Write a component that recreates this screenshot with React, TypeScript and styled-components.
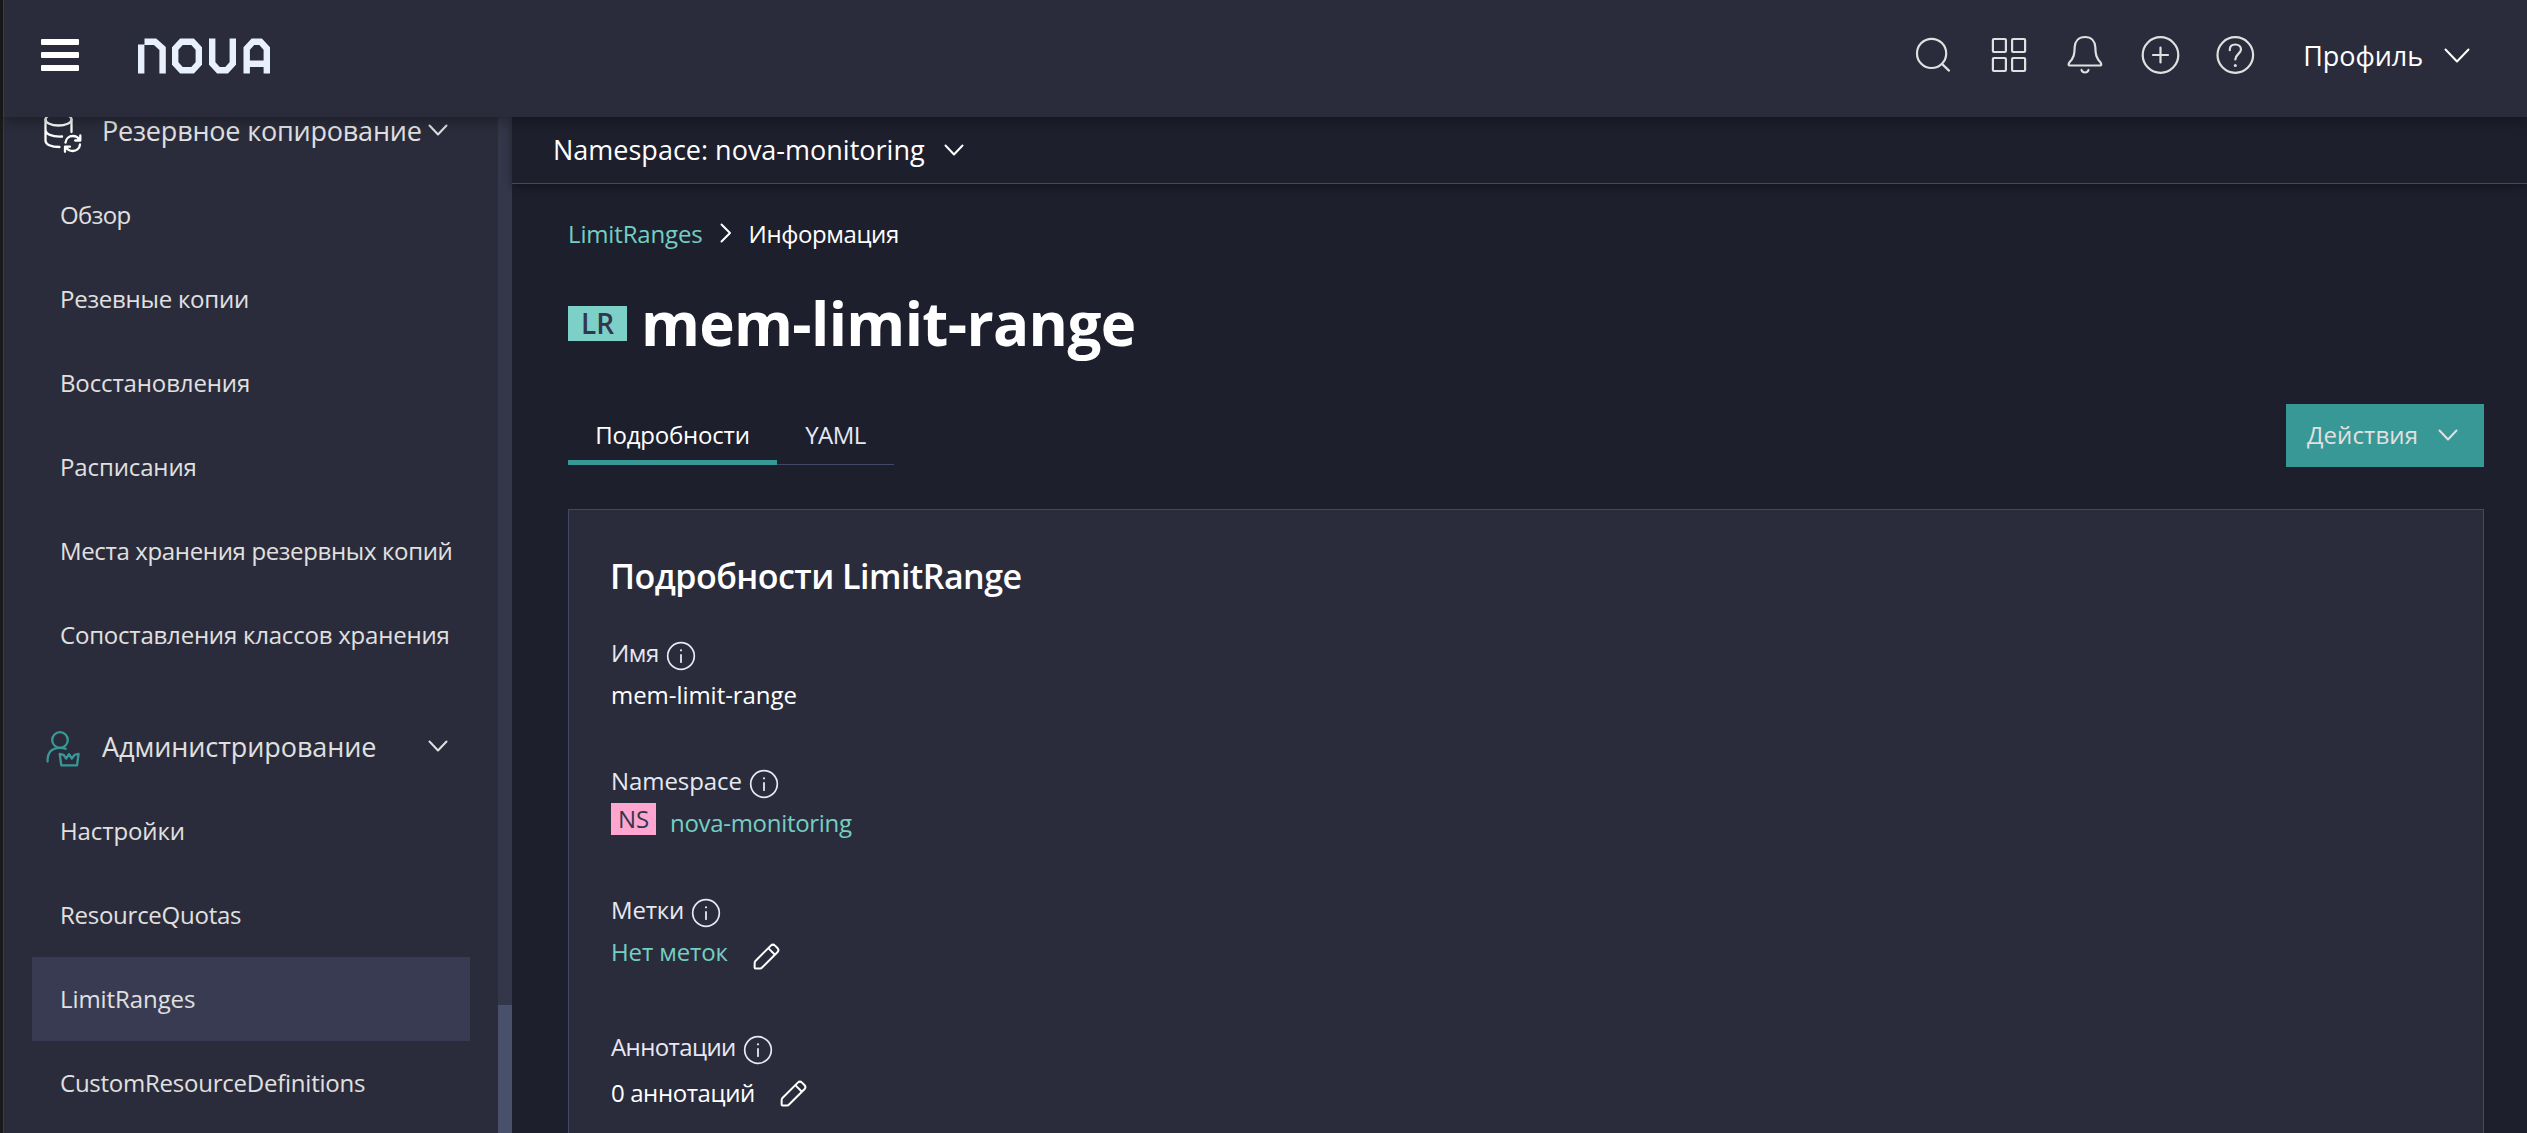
import React from "react";
import styled, { createGlobalStyle } from "styled-components";

const color = {
  page: "#1e1f2d",
  panel: "#2b2c3b",
  active: "#393b52",
  border: "#434868",
  teal: "#389896",
  link: "#74cfc3",
  text: "#ffffff",
  soft: "#e6e8f4",
  nav: "#e0e0e0",
};

const GlobalStyle = createGlobalStyle`
  * { box-sizing: border-box; }
  html, body, #root { margin: 0; height: 100%; }
  body {
    background: ${color.page};
    color: ${color.text};
    font-family: "Open Sans", "Noto Sans", sans-serif;
    font-size: 24px;
    overflow: hidden;
  }
`;

const Text = styled.span<{ $track?: number }>`
  letter-spacing: ${(p) => p.$track ?? 0}px;
  white-space: nowrap;
`;

const Shell = styled.div`
  display: flex;
  flex-direction: column;
  height: 1133px;
  border-left: 3px solid #1a1a1b;
`;

const Header = styled.header`
  position: relative;
  z-index: 2;
  flex: none;
  display: flex;
  align-items: center;
  height: 117px;
  padding: 0 57px 0 37px;
  background: ${color.panel};
  border-left: 1px solid #3c3c42;
  box-shadow: 0 4px 12px rgba(0, 0, 0, 0.32);
`;

const Burger = styled.div`
  display: grid;
  gap: 7px;
  width: 38px;
  margin-top: -7px;
`;

const BurgerBar = styled.i`
  height: 6px;
  border-radius: 1px;
  background: #fff;
`;

const Logo = styled.svg`
  display: block;
  margin: -6px auto 0 59px;
`;

const Tools = styled.div`
  display: flex;
  gap: 35.5px;
  margin: -7px 48px 0 0;
`;

const Icon = styled.svg`
  display: block;
  flex: none;
  fill: none;
  stroke: currentColor;
  stroke-width: 2;
  stroke-linecap: round;
  stroke-linejoin: round;
`;

const ToolIcon = styled(Icon)`
  width: 40px;
  height: 40px;
  color: ${color.nav};
  stroke-width: 2.2;
`;

const Profile = styled.div`
  display: flex;
  align-items: center;
  gap: 21px;
  font-size: 27px;
  line-height: 40px;
  margin-top: -7px;
`;

const ProfileName = styled(Text)`
  padding-top: 2px;
`;

const Body = styled.div`
  flex: 1;
  min-height: 0;
  display: flex;
`;

const Sidebar = styled.nav`
  width: 495px;
  flex: none;
  overflow: hidden;
  padding: 0 28px;
  background: ${color.panel};
  border-left: 1px solid #3c3c42;
  color: ${color.nav};
`;

const Group = styled.div<{ $first?: boolean }>`
  display: flex;
  align-items: center;
  height: ${(p) => (p.$first ? 84 : 70)}px;
  margin: ${(p) => (p.$first ? "-28px 0 0" : "35px 0 7px")};
  padding: 0 22px 2px 10px;
  font-size: 27px;
  line-height: 27px;
`;

const GroupIcon = styled(Icon)<{ $top?: number }>`
  width: 42px;
  height: 44px;
  margin: ${(p) => p.$top ?? 0}px 18px 0 0;
  stroke-width: 2.3;
`;

const GroupLabel = styled(Text)`
  flex: 1;
`;

const NavItem = styled.div<{ $active?: boolean }>`
  display: flex;
  align-items: center;
  height: 84px;
  padding: 0 0 2px 28px;
  background: ${(p) => (p.$active ? color.active : "transparent")};
`;

const Track = styled.div`
  display: flex;
  flex-direction: column;
  justify-content: flex-end;
  width: 14px;
  flex: none;
  background: #343649;
`;

const Thumb = styled.div`
  height: 128px;
  background: #48506b;
`;

const Main = styled.main`
  flex: 1;
  min-width: 0;
  display: flex;
  flex-direction: column;
`;

const NamespaceBar = styled.div`
  flex: none;
  display: flex;
  align-items: center;
  gap: 19px;
  height: 67px;
  padding: 0 0 1px 41px;
  border-bottom: 1px solid ${color.border};
  box-shadow: 0 3px 8px rgba(0, 0, 0, 0.35);
  font-size: 27px;
`;

const Content = styled.section`
  flex: 1;
  min-height: 0;
  display: flex;
  flex-direction: column;
  padding: 29px 43px 0 56px;
`;

const Crumbs = styled.div`
  display: flex;
  align-items: center;
  height: 40px;
  gap: 17px;
`;

const Link = styled(Text)`
  color: ${color.link};
`;

const TitleRow = styled.div`
  display: flex;
  align-items: center;
  gap: 14px;
  height: 80px;
  margin-top: 30px;
`;

const KindBadge = styled.span`
  display: flex;
  align-items: center;
  justify-content: center;
  width: 59px;
  height: 35px;
  background: #7cd0c8;
  color: #32374c;
  font-size: 28px;
  font-weight: 600;
`;

const Title = styled.h1<{ $track: number }>`
  margin: 0;
  font-size: 60px;
  line-height: 80px;
  font-weight: 700;
  letter-spacing: ${(p) => p.$track}px;
`;

const TabRow = styled.div`
  display: flex;
  justify-content: space-between;
  height: 63px;
  margin-top: 41px;
`;

const Tabs = styled.div`
  display: flex;
  height: 61px;
`;

const Tab = styled.div<{ $width: number; $active?: boolean }>`
  display: flex;
  justify-content: center;
  width: ${(p) => p.$width}px;
  line-height: 62px;
  color: ${(p) => (p.$active ? color.text : color.soft)};
  box-shadow: inset 0 ${(p) => (p.$active ? "-5px" : "-1px")} 0
    ${(p) => (p.$active ? color.teal : color.border)};
`;

const ActionButton = styled.button`
  display: flex;
  align-items: center;
  justify-content: space-between;
  width: 198px;
  padding: 0 26px 2px 21px;
  border: 0;
  background: ${color.teal};
  color: ${color.nav};
  font: inherit;
`;

const Card = styled.div`
  flex: 1;
  min-height: 0;
  overflow: hidden;
  margin-top: 42px;
  padding: 43px 42px 0;
  border: 1px solid ${color.border};
  border-bottom: 0;
  background: ${color.panel};
`;

const CardTitle = styled.h2`
  margin: 0 0 33px -1px;
  font-size: 34px;
  line-height: 46px;
  font-weight: 600;
  letter-spacing: -0.53px;
`;

const Field = styled.div<{ $gap: number }>`
  margin-bottom: ${(p) => p.$gap}px;
`;

const FieldLabel = styled.div`
  display: flex;
  gap: 7px;
  height: 42px;
  line-height: 42px;
  color: ${color.soft};
`;

const InfoIcon = styled(Icon)`
  width: 30px;
  height: 30px;
  margin-top: 9px;
`;

const FieldValue = styled.div<{ $height?: number }>`
  display: flex;
  height: ${(p) => p.$height ?? 42}px;
  line-height: ${(p) => p.$height ?? 42}px;
`;

const NsBadge = styled.span`
  width: 45px;
  height: 32px;
  margin: 1px 14px 0 0;
  background: #ffa6d0;
  color: #32374c;
  line-height: 31px;
  text-align: center;
`;

const PencilIcon = styled(Icon)<{ $top: number }>`
  width: 28px;
  height: 28px;
  margin: ${(p) => p.$top}px 0 0 25px;
`;

const Chevron = ({ w, h }: { w: number; h: number }) => (
  <Icon width={w + 2} height={h + 2} viewBox={`-1 -1 ${w + 2} ${h + 2}`}>
    <path d={`M0.5 0.5L${w / 2} ${h - 0.5}L${w - 0.5} 0.5`} />
  </Icon>
);

const Info = () => (
  <InfoIcon viewBox="0 0 30 30">
    <circle cx="15" cy="15" r="13.3" strokeWidth="1.7" />
    <path d="M15 14v7.2" strokeWidth="1.8" />
    <circle cx="15" cy="9.3" r="1.1" fill="currentColor" stroke="none" />
  </InfoIcon>
);

const Pencil = ({ top }: { top: number }) => (
  <PencilIcon viewBox="0 0 28 28" $top={top}>
    <path d="M2.2 18.2L17.8 2.6a3 3 0 0 1 4.2 0l2.4 2.4a3 3 0 0 1 0 4.2L8.8 24.8a3 3 0 0 1-1.6.7L2.6 25.6a1 1 0 0 1-1-1l.1-4.9a3 3 0 0 1 .5-1.5zM15.3 5.1l6.6 6.6" />
  </PencilIcon>
);

type Item = { label: string; track: number; active?: boolean };

const backup: Item[] = [
  { label: "Обзор", track: -0.62 },
  { label: "Резевные копии", track: -0.24 },
  { label: "Восстановления", track: -0.13 },
  { label: "Расписания", track: -0.13 },
  { label: "Места хранения резервных копий", track: -0.35 },
  { label: "Сопоставления классов хранения", track: -0.21 },
];

const admin: Item[] = [
  { label: "Настройки", track: -0.1 },
  { label: "ResourceQuotas", track: -0.26 },
  { label: "LimitRanges", track: -0.08, active: true },
  { label: "CustomResourceDefinitions", track: -0.24 },
];

const NavList = ({ items }: { items: Item[] }) => (
  <>
    {items.map((item) => (
      <NavItem key={item.label} $active={item.active}>
        <Text $track={item.track}>{item.label}</Text>
      </NavItem>
    ))}
  </>
);

export default function App() {
  return (
    <>
      <GlobalStyle />
      <Shell>
        <Header>
          <Burger>
            <BurgerBar />
            <BurgerBar />
            <BurgerBar />
          </Burger>
          <Logo width="134" height="36" viewBox="0 0 134 36" fill="none" stroke="#e8f0fc" strokeWidth="6.4">
            <path d="M3.2 35.5V6.5M6.5 3.7H17L24.6 10.5V35.5" />
            <path d="M46 3.7H54.5L60.8 10.5V25.5L54.5 32.3H43.5L37.2 25.5V10.5L43.5 3.7H48" />
            <path d="M74.2 0.5V25.5L80.5 32.3H88.5L94.8 25.5V0.5" />
            <path d="M108.7 35.5V10.5L115 3.7H122.5L128.8 10.5V35.5M108 25.8H128" />
          </Logo>
          <Tools>
            <ToolIcon viewBox="0 0 40 40">
              <circle cx="18.6" cy="18.4" r="14.6" />
              <path d="M29.2 29.1L36 35.6" />
            </ToolIcon>
            <ToolIcon viewBox="0 0 40 40">
              <rect x="3.9" y="4" width="13" height="13" rx="1" />
              <rect x="23.1" y="4" width="13" height="13" rx="1" />
              <rect x="3.9" y="23" width="13" height="13" rx="1" />
              <rect x="23.1" y="23" width="13" height="13" rx="1" />
            </ToolIcon>
            <ToolIcon viewBox="0 0 40 40">
              <path d="M21 2C14.5 2 11 6.500 10.700 12C10.500 19 10 23 5.300 27.500Q3.600 30.500 6 30.500H36Q38.200 30.500 36.600 27.500C32 23 31.500 19 31.300 12C31 6.500 27.500 2 21 2Z" />
              <path d="M17.5 35a3.7 3.7 0 0 0 7 0" />
            </ToolIcon>
            <ToolIcon viewBox="0 0 40 40">
              <circle cx="20.5" cy="20" r="17.8" />
              <path d="M13 20H28M20.5 12.5V27.5" />
            </ToolIcon>
            <ToolIcon viewBox="0 0 40 40">
              <circle cx="20.3" cy="20" r="17.8" />
              <path d="M14.8 15.2V14.5C14.8 11 17.1 9.5 20.300 9.5S26 11.5 26 14.5C26 18.5 20.300 19.5 20.300 24.5" />
              <circle cx="20.3" cy="30.5" r="1.5" fill="currentColor" stroke="none" />
            </ToolIcon>
          </Tools>
          <Profile>
            <ProfileName $track={-0.06}>Профиль</ProfileName>
            <Chevron w={24} h={13} />
          </Profile>
        </Header>
        <Body>
          <Sidebar>
            <Group $first>
              <GroupIcon viewBox="0 0 42 44" color="#ffffff" $top={1}>
                <ellipse cx="16.5" cy="10.5" rx="13" ry="6" />
                <path d="M3.500 10.500V31.500C3.500 35.500 9 38 17.500 38M29.500 10.500V23M3.500 20.500C3.500 25 9.500 28 20 27.500" />
                <path d="M23.500 33.500C24 29.500 27 27 30.800 27C33.800 27 36.300 28.500 37.500 31M38.300 26.500V31.500H33.200M38 35.500C37.500 39.500 34.500 42 30.800 42C27.800 42 25.300 40.500 24 38M23 42.800V37.700H28" />
              </GroupIcon>
              <GroupLabel $track={-0.2}>Резервное копирование</GroupLabel>
              <Chevron w={18} h={10} />
            </Group>
            <NavList items={backup} />
            <Group>
              <GroupIcon viewBox="0 0 42 44" color={color.teal} $top={8}>
                <circle cx="18" cy="12" r="7.8" />
                <path d="M5.6 33.500C5.2 24 10 19.8 18 19.8C20.5 19.8 22.5 20 23.700 20.7" />
                <path d="M17.7 26L21.5 26.800L24.200 30.500L27 26.200L29.800 30.500L32.700 26.800L36.600 25.800L35 37.300H19.300Z" />
              </GroupIcon>
              <GroupLabel $track={-0.08}>Администрирование</GroupLabel>
              <Chevron w={18} h={10} />
            </Group>
            <NavList items={admin} />
          </Sidebar>
          <Track>
            <Thumb />
          </Track>
          <Main>
            <NamespaceBar>
              <Text>Namespace: nova-monitoring</Text>
              <Chevron w={18} h={10} />
            </NamespaceBar>
            <Content>
              <Crumbs>
                <Link $track={-0.15}>LimitRanges</Link>
                <Icon width="12" height="20" viewBox="0 0 12 20">
                  <path d="M1.5 1.5L10 10L1.5 18.5" />
                </Icon>
                <Text $track={-0.4}>Информация</Text>
              </Crumbs>
              <TitleRow>
                <KindBadge>LR</KindBadge>
                <Title $track={-0.64}>mem-limit-range</Title>
              </TitleRow>
              <TabRow>
                <Tabs>
                  <Tab $width={209} $active>
                    <Text $track={-0.2}>Подробности</Text>
                  </Tab>
                  <Tab $width={117}>
                    <Text $track={-0.56}>YAML</Text>
                  </Tab>
                </Tabs>
                <ActionButton>
                  <Text $track={0.1}>Действия</Text>
                  <Chevron w={18} h={10} />
                </ActionButton>
              </TabRow>
              <Card>
                <CardTitle>Подробности LimitRange</CardTitle>
                <Field $gap={44}>
                  <FieldLabel>
                    <Text $track={-0.42}>Имя</Text>
                    <Info />
                  </FieldLabel>
                  <FieldValue>
                    <Text $track={-0.05}>mem-limit-range</Text>
                  </FieldValue>
                </Field>
                <Field $gap={45}>
                  <FieldLabel>
                    <Text $track={-0.07}>Namespace</Text>
                    <Info />
                  </FieldLabel>
                  <FieldValue>
                    <NsBadge>NS</NsBadge>
                    <Link $track={-0.3}>nova-monitoring</Link>
                  </FieldValue>
                </Field>
                <Field $gap={53}>
                  <FieldLabel>
                    <Text $track={-0.2}>Метки</Text>
                    <Info />
                  </FieldLabel>
                  <FieldValue>
                    <Link $track={-0.13}>Нет меток</Link>
                    <Pencil top={12} />
                  </FieldValue>
                </Field>
                <Field $gap={0}>
                  <FieldLabel>
                    <Text $track={-0.6}>Аннотации</Text>
                    <Info />
                  </FieldLabel>
                  <FieldValue $height={50}>
                    <Text $track={-0.4}>0 аннотаций</Text>
                    <Pencil top={12} />
                  </FieldValue>
                </Field>
              </Card>
            </Content>
          </Main>
        </Body>
      </Shell>
    </>
  );
}
